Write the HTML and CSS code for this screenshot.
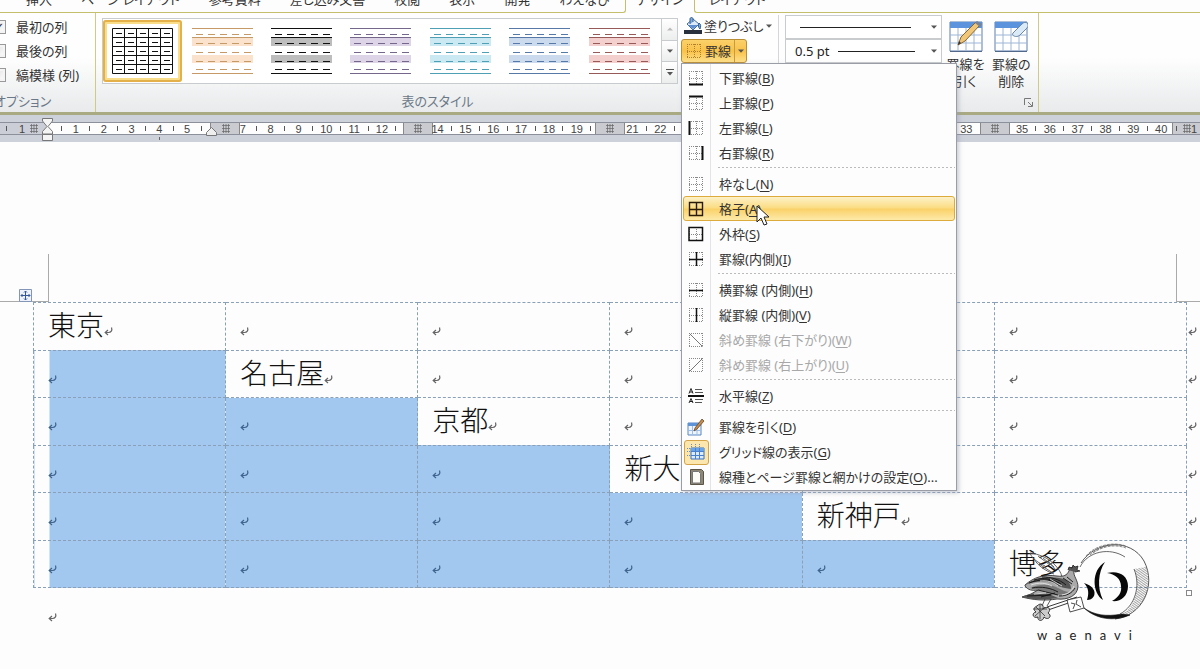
FILE: index.html
```html
<!DOCTYPE html>
<html lang="ja">
<head>
<meta charset="utf-8">
<meta name="viewport" content="width=device-width, initial-scale=1">
<title>表のスタイル</title>
<link rel="stylesheet" href="styles.css">
</head>
<body>
<svg class="defs" aria-hidden="true">
  <symbol id="ret" viewBox="0 0 9 9"><path d="M7.500 .5c1 3-.5 5-3 5H2M4 3 1.200 5.500 4 8" fill="none" stroke="currentColor" stroke-width="1.200"/></symbol>
  <symbol id="hash" viewBox="0 0 9 9"><path d="M1 1.500h8M1 4.500h8M1 7.500h8M2.500 0v9M5 0v9M7.500 0v9" stroke="#666" stroke-width=".7"/></symbol>
  <symbol id="down" viewBox="0 0 6 4"><path d="M0 .5h6L3 3.800z" fill="currentColor"/></symbol>
  <symbol id="style" viewBox="0 0 61 46">
    <path d="M0 10h61v8H0zM0 27h61v8H0z" class="band"/>
    <path d="M0 .5h61M0 9.500h61M0 45.500h61" stroke="currentColor"/>
    <path d="M4 6.500h56M4 15.500h56M4 24.500h56M4 33.500h56M4 41.500h56" stroke="currentColor" stroke-dasharray="7 5"/>
  </symbol>
  <symbol id="dots" viewBox="0 0 16 16"><path d="M1 1.500h14M1 8.500h14M1 14.500h14M1.500 1v14M8.500 1v14M14.500 1v14" stroke="#888" stroke-dasharray="1 1"/></symbol>
  <symbol id="frame" viewBox="0 0 16 16"><path d="M1 1.500h14M1 14.500h14M1.500 1v14M14.500 1v14" stroke="#888" stroke-dasharray="1 1"/></symbol>
  <symbol id="sheet" viewBox="0 0 34 32">
    <path d="M1 1h32v29H1z" fill="#fff" stroke="#5c7eae"/>
    <path d="M1 1h32v6H1z" fill="#5b93dc"/>
    <path d="M1 14h32M1 22h32M9 7v23M17 7v23M25 7v23" stroke="#9db6d4"/>
    <path d="M1 30.500h32" stroke="#52698c"/>
  </symbol>
</svg>

<header class="ribbon">
  <nav class="tabs" aria-label="リボン">
    <div class="tabs-main">
      <button>挿入</button><button>ページ レイアウト</button><button>参考資料</button><button>差し込み文書</button><button>校閲</button><button>表示</button><button>開発</button><button>わえなび</button>
    </div>
    <button class="active">デザイン</button>
    <div class="tabs-rest"><button>レイアウト</button></div>
  </nav>

  <div class="groups">
    <section class="group options">
      <div class="checks">
        <label><input type="checkbox" checked>最初の列</label>
        <label><input type="checkbox">最後の列</label>
        <label><input type="checkbox">縞模様 (列)</label>
      </div>
      <h2>オプション</h2>
    </section>

    <section class="group styles">
      <div class="row">
        <div class="gallery">
          <div class="thumbs">
            <button class="selected" aria-label="表 (格子)"><svg viewBox="0 0 61 46"><path d="M.5.500h60v45H.5zM0 9.500h61M0 18.500h61M0 27.500h61M0 36.500h61M12.500 0v46M24.500 0v46M36.500 0v46M48.500 0v46" fill="none" stroke="#111"/><path d="M4 5.500h56M4 14.500h56M4 23.500h56M4 32.500h56M4 41.500h56" stroke="#111" stroke-dasharray="6 6"/></svg></button>
            <button class="orange" aria-label="オレンジ"><svg><use href="#style"/></svg></button>
            <button class="black" aria-label="黒"><svg><use href="#style"/></svg></button>
            <button class="purple" aria-label="紫"><svg><use href="#style"/></svg></button>
            <button class="aqua" aria-label="水色"><svg><use href="#style"/></svg></button>
            <button class="blue" aria-label="青"><svg><use href="#style"/></svg></button>
            <button class="red" aria-label="赤"><svg><use href="#style"/></svg></button>
          </div>
          <div class="scroller">
            <button disabled aria-label="上へ"><svg viewBox="0 0 6 4"><path d="M0 3.500h6L3 .5z" fill="#bbb"/></svg></button>
            <button aria-label="下へ"><svg><use href="#down"/></svg></button>
            <button aria-label="その他"><svg class="more" viewBox="0 0 8 7"><path d="M0 .5h8" stroke="#555"/><path d="M1 3h6L4 6.500z" fill="#555"/></svg></button>
          </div>
        </div>
        <div class="fills">
          <button class="tool"><svg class="bucket" viewBox="0 0 18 18"><path d="M0 13h18v4H0z" fill="#27303c"/><path d="M3 7 9 2l6 5-6 6z" fill="#dce9f8" stroke="#426ba4"/><path d="M4 8h10l-5 4z" fill="#5d8fcf"/><path d="M6 7V2c0-2 3-2 3 0v3M15 6c2 1 2 4 1 6-2-2-2-4-1-6z" fill="#7ba9df" stroke="#345c91"/></svg>塗りつぶし<svg class="caret"><use href="#down"/></svg></button>
          <div class="dropdown">
            <button class="split" aria-expanded="true"><svg class="ico" viewBox="0 0 16 16"><path d="M1 1.500h14M1 8.500h14M1 14.500h14M1.500 1v14M8.500 1v14M14.500 1v14" stroke="#b0802a" stroke-dasharray="1 1"/></svg>罫線<span class="arrow"><svg><use href="#down"/></svg></span></button>
            <div class="menu" role="menu">
              <button role="menuitem"><svg class="ico" viewBox="0 0 16 16"><use href="#dots"/><path d="M1 14.500h14" stroke="#111" stroke-width="2"/></svg><span>下罫線(<u>B</u>)</span></button>
              <button role="menuitem"><svg class="ico" viewBox="0 0 16 16"><use href="#dots"/><path d="M1 1.500h14" stroke="#111" stroke-width="2"/></svg><span>上罫線(<u>P</u>)</span></button>
              <button role="menuitem"><svg class="ico" viewBox="0 0 16 16"><use href="#dots"/><path d="M1.500 1v14" stroke="#111" stroke-width="2"/></svg><span>左罫線(<u>L</u>)</span></button>
              <button role="menuitem"><svg class="ico" viewBox="0 0 16 16"><use href="#dots"/><path d="M14.500 1v14" stroke="#111" stroke-width="2"/></svg><span>右罫線(<u>R</u>)</span></button>
              <hr>
              <button role="menuitem"><svg class="ico" viewBox="0 0 16 16"><use href="#dots"/></svg><span>枠なし(<u>N</u>)</span></button>
              <button role="menuitem" class="hover"><svg class="ico" viewBox="0 0 16 16"><path d="M1.500 1.500h13v13h-13zM8.500 1v14M1 8.500h14" fill="none" stroke="#2a1c06" stroke-width="1.400"/></svg><span>格子(<u>A</u>)</span>
                <svg class="cursor" viewBox="0 0 13 22"><path d="M1 1v16l4-4 3 7 3-1-3-7h5z" fill="#fff" stroke="#222"/></svg></button>
              <button role="menuitem"><svg class="ico" viewBox="0 0 16 16"><use href="#dots"/><path d="M1 1.500h13.500v13H1z" fill="none" stroke="#111" stroke-width="1.500"/></svg><span>外枠(<u>S</u>)</span></button>
              <button role="menuitem"><svg class="ico" viewBox="0 0 16 16"><use href="#dots"/><path d="M8.500 1v14M1 8.500h14" stroke="#111" stroke-width="1.500"/></svg><span>罫線(内側)(<u>I</u>)</span></button>
              <hr>
              <button role="menuitem"><svg class="ico" viewBox="0 0 16 16"><use href="#dots"/><path d="M1 8.500h14" stroke="#111" stroke-width="1.500"/></svg><span>横罫線 (内側)(<u>H</u>)</span></button>
              <button role="menuitem"><svg class="ico" viewBox="0 0 16 16"><use href="#dots"/><path d="M8.500 1v14" stroke="#111" stroke-width="1.500"/></svg><span>縦罫線 (内側)(<u>V</u>)</span></button>
              <button role="menuitem" disabled><svg class="ico" viewBox="0 0 16 16"><use href="#frame"/><path d="m1.500 1.500 13 13" stroke="#777"/></svg><span>斜め罫線 (右下がり)(<u>W</u>)</span></button>
              <button role="menuitem" disabled><svg class="ico" viewBox="0 0 16 16"><use href="#frame"/><path d="m1.500 14.500 13-13" stroke="#777"/></svg><span>斜め罫線 (右上がり)(<u>U</u>)</span></button>
              <hr>
              <button role="menuitem"><svg class="ico" viewBox="0 0 16 16"><path d="M0 8h16" stroke="#111" stroke-width="2"/><path d="m1 5.500 2-5 2 5M2 4h3M1 15l2-4.500L5 15M2 13.500h3" fill="none" stroke="#222"/><path d="M7 1.500h7M7 4.500h8M7 11.500h8M7 14.500h7" stroke="#555"/></svg><span>水平線(<u>Z</u>)</span></button>
              <hr>
              <button role="menuitem"><svg class="ico big" viewBox="0 0 18 18"><path d="M1 5h13v12H1z" fill="#eef5ff" stroke="#5a86c4"/><path d="M1 5h13v3H1z" fill="#5f93d8"/><path d="M1 12.500h13M5.500 8v9M10 8v9" stroke="#9dbce6"/><path d="m7 13 1-3 7-9 2 2-7 8z" fill="#c58b4c" stroke="#6a4926" stroke-width=".8"/></svg><span>罫線を引く(<u>D</u>)</span></button>
              <button role="menuitem" class="on"><svg class="ico big" viewBox="0 0 18 18"><path d="M4 5h13v11H4z" fill="#dcebfb" stroke="#3a70bd"/><path d="M4 5h13v3H4z" fill="#69a3e8"/><path d="M4 8.500h13M4 12.500h13M8.500 5v11M12.500 5v11" stroke="#4a80cd"/><path d="M0 5.500h4M0 8.500h4M0 12.500h4M4.500 1v4M8.500 1v4M12.500 1v4" stroke="#6f8fb8" stroke-dasharray="1 1"/></svg><span>グリッド線の表示(<u>G</u>)</span></button>
              <button role="menuitem"><svg class="ico big" viewBox="0 0 18 18"><path d="M3.500 1.500h11l2 2v13h-13z" fill="#8c8777" stroke="#5a5547"/><path d="M5.500 3.500h6l2 2v9.500h-8z" fill="#fdfcf6" stroke="#777"/></svg><span>線種とページ罫線と網かけの設定(<u>O</u>)...</span></button>
            </div>
          </div>
        </div>
      </div>
      <h2>表のスタイル</h2>
    </section>

    <section class="group pens">
      <div class="combos">
        <label class="combo"><select aria-label="ペンのスタイル"><option></option></select><i class="stroke wide"></i><svg><use href="#down"/></svg></label>
        <label class="combo"><select aria-label="ペンの太さ"><option>0.5 pt</option></select><i class="stroke"></i><svg><use href="#down"/></svg></label>
      </div>
      <button class="large"><svg viewBox="0 0 34 32"><use href="#sheet"/><path d="m9 24 3-8L27 1l4 3-15 16z" fill="#f0c679" stroke="#8a662c"/><path d="m26 2 2-2 5 3-2 3z" fill="#75839a"/><path d="m9 24 1-4 2 2z" fill="#333"/></svg><span>罫線を<br>引く</span></button>
      <button class="large"><svg viewBox="0 0 34 32"><use href="#sheet"/><path d="m19 12 9-9c4-4 8 0 5 4l-7 7c-3 3-9 1-7-2z" fill="#dbeaf7" stroke="#6c87a7"/></svg><span>罫線の<br>削除</span></button>
      <button class="launcher" aria-label="罫線の設定"><svg viewBox="0 0 9 9"><path d="M.5 7V.5H7M4 4l4 4M8.500 4v4.500H4" fill="none" stroke="#777"/></svg></button>
    </section>
  </div>
</header>

<div class="ruler">
  <div class="bands">
    <i class="edge"></i><i class="col first"></i><i class="mark"><svg><use href="#hash"/></svg></i><i class="col"></i><i class="mark"><svg><use href="#hash"/></svg></i><i class="col"></i><i class="mark"><svg><use href="#hash"/></svg></i><i class="col"></i><i class="mark"><svg><use href="#hash"/></svg></i><i class="col"></i><i class="mark"><svg><use href="#hash"/></svg></i><i class="col"></i><i class="mark end"><svg><use href="#hash"/></svg></i>
  </div>
  <div class="before"><b></b><span>1</span></div>
  <svg class="before-mark"><use href="#hash"/></svg>
  <ol class="scale">
    <li><span>1</span></li><li><span>2</span></li><li><span>3</span></li><li><span>4</span></li><li><span>5</span></li><li></li><li class="bare"><span>7</span></li><li><span>8</span></li><li><span>9</span></li><li><span>10</span></li><li><span>11</span></li><li><span>12</span></li><li></li><li class="bare"><span>14</span></li><li><span>15</span></li><li><span>16</span></li><li><span>17</span></li><li><span>18</span></li><li><span>19</span></li><li></li><li class="bare"><span>21</span></li><li><span>22</span></li><li></li><li></li><li></li><li></li><li></li><li class="bare"></li><li></li><li></li><li></li><li></li><li><span>33</span></li><li class="bare"></li><li class="bare"><span>35</span></li><li><span>36</span></li><li><span>37</span></li><li><span>38</span></li><li><span>39</span></li><li><span>40</span></li>
  </ol>
  <div class="after"><b></b><span>1</span></div>
  <svg class="indent" viewBox="0 0 11 24"><path d="M.5.500h10V3L6 8.500l4.500 5V16H.5v-2.500L5 8.500.5 3z" fill="#f4f4f4" stroke="#777"/><path d="M.5 16.500h10v6H.5z" fill="#f4f4f4" stroke="#777"/></svg>
  <svg class="indent right" viewBox="0 0 11 9"><path d="m5.500.500 5 5v3H.5v-3z" fill="#eee" stroke="#777"/></svg>
  <i class="tabstop"></i>
</div>

<main class="page">
  <div class="corners"><i class="corner-left"></i><i class="corner-right"></i>
    <button class="handle" aria-label="表の移動"><svg viewBox="0 0 13 13"><path d="M.5.500h12v12H.5z" fill="#eef2fb" stroke="#8296b8"/><path d="M6.500 2v9M2 6.500h9M5 3.500l1.500-1.500L8 3.500M5 9.500 6.500 11 8 9.500M3.500 5 2 6.500 3.500 8M9.500 5 11 6.500 9.500 8" fill="none" stroke="#35589a"/></svg></button>
  </div>
  <table>
    <colgroup><col><col><col><col><col><col><col class="tail"></colgroup>
    <tbody>
      <tr><td>東京<svg><use href="#ret"/></svg></td><td><svg><use href="#ret"/></svg></td><td><svg><use href="#ret"/></svg></td><td><svg><use href="#ret"/></svg></td><td><svg><use href="#ret"/></svg></td><td><svg><use href="#ret"/></svg></td><td><svg><use href="#ret"/></svg></td></tr>
      <tr><td class="sel"><svg><use href="#ret"/></svg></td><td>名古屋<svg><use href="#ret"/></svg></td><td><svg><use href="#ret"/></svg></td><td><svg><use href="#ret"/></svg></td><td><svg><use href="#ret"/></svg></td><td><svg><use href="#ret"/></svg></td><td><svg><use href="#ret"/></svg></td></tr>
      <tr><td class="sel"><svg><use href="#ret"/></svg></td><td class="sel"><svg><use href="#ret"/></svg></td><td>京都<svg><use href="#ret"/></svg></td><td><svg><use href="#ret"/></svg></td><td><svg><use href="#ret"/></svg></td><td><svg><use href="#ret"/></svg></td><td><svg><use href="#ret"/></svg></td></tr>
      <tr><td class="sel"><svg><use href="#ret"/></svg></td><td class="sel"><svg><use href="#ret"/></svg></td><td class="sel"><svg><use href="#ret"/></svg></td><td>新大阪<svg><use href="#ret"/></svg></td><td><svg><use href="#ret"/></svg></td><td><svg><use href="#ret"/></svg></td><td><svg><use href="#ret"/></svg></td></tr>
      <tr><td class="sel"><svg><use href="#ret"/></svg></td><td class="sel"><svg><use href="#ret"/></svg></td><td class="sel"><svg><use href="#ret"/></svg></td><td class="sel"><svg><use href="#ret"/></svg></td><td>新神戸<svg><use href="#ret"/></svg></td><td><svg><use href="#ret"/></svg></td><td><svg><use href="#ret"/></svg></td></tr>
      <tr><td class="sel"><svg><use href="#ret"/></svg></td><td class="sel"><svg><use href="#ret"/></svg></td><td class="sel"><svg><use href="#ret"/></svg></td><td class="sel"><svg><use href="#ret"/></svg></td><td class="sel"><svg><use href="#ret"/></svg></td><td>博多</td><td><svg><use href="#ret"/></svg></td></tr>
    </tbody>
  </table>
  <div class="below"><svg><use href="#ret"/></svg><i class="resize"></i></div>
</main>

<div class="brand">
  <svg viewBox="0 0 130 80" aria-hidden="true">
    <defs><pattern id="hatch" width="2" height="2" patternUnits="userSpaceOnUse" patternTransform="rotate(35)"><path d="M0 0h2" stroke="#222" stroke-width="1.100"/></pattern></defs>
    <path d="M126 24c8 25-6 49-33 52 15-6 20-14 23-25 2-8 1-17-2-25z" fill="url(#hatch)" opacity=".8"/>
    <path d="M61 20C76-3 111-5 124 18c13 25-2 55-29 58" fill="none" stroke="#444" stroke-width=".9"/>
    <path d="M60 24C68 8 90 4 105 14M114 26c7 17 1 37-14 45" fill="none" stroke="#444" stroke-width=".8"/>
    <path d="M66 13C74 3 92-2 106 3M70 12C78 5 88 1 98 2M73 10C83 3 95 1 106 5" fill="none" stroke="#666" stroke-width=".7" stroke-dasharray="3 1"/>
    <path d="M64 65c10 7 22 9 38 6l8 1c-17 7-34 4-46-7z" fill="#111" stroke="#111" stroke-width=".6"/>
    <path d="M85 19C71 27 72 50 83 57 77 45 78 29 85 19zM87 30c11-3 21 2 21 13 0 11-8 16-16 15 7-4 10-9 9-15 0-7-6-12-14-13zM64 40c9 3 12 8 10 13-2 3-4 4-7 4 2-6 2-12-3-17z" fill="#080808"/>
    <path d="M10 10c9 1 18 5 24 11 4 4 7 8 8 13M10 10c2 6 9 10 15 13M14 16c4 7 12 12 20 15M18 13l12 9M23 15l11 9M19 21l14 9M28 18l8 9" fill="none" stroke="#555" stroke-width=".9"/>
    <path d="M5 42C14 34 24 31 37 33c7 1 10-1 12-5 1-4 5-5 8-3l-3 3c-1 5 4 9 4 16-1 9-10 13-21 12-12 2-24 1-35-2l9-3 7-4c-6 1-10 0-13-4z" fill="#aaa" stroke="#222" stroke-width=".8"/>
    <path d="M5 42c10-7 21-9 34-7 8 1 12 5 12 11-9-1-13-3-19-6-10-3-19-1-27 2z" fill="#555"/>
    <path d="M10 45c9-4 18-4 26-1 6 3 10 5 14 5-8 4-17 3-23 0-6-2-12-2-17-4z" fill="#777"/>
    <path d="M2 54c9-4 18-5 27-3l9 4c-12 2-26 2-36-1z" fill="#555"/>
    <path d="M9 40c10-4 20-4 30 0M14 37c9-3 19-1 27 4M22 34c9 0 17 2 24 8M12 45c9-2 19 0 26 4M18 47l20 5M7 53l24-1M21 54l14-4M39 53c8 0 13-3 16-8M43 35l9 6M47 34l6 5" fill="none" stroke="#111" stroke-width=".9"/>
    <path d="M11 42c8-3 15-2 21 1M20 38c7-1 13 1 18 5M30 36l12 7M42 52c6-1 10-4 12-9M14 51l12-1" fill="none" stroke="#eee" stroke-width=".8"/>
    <path d="m48 27 1-3 3 1 1-3 2 2 3-1-1 4 3 1-5 1" fill="#555" stroke="#111" stroke-width=".7"/>
    <path d="m27 64 30-10M28 67l32-11" stroke="#222" stroke-width=".9"/>
    <path d="m47 57 14-3 3 11-14 4zM51 60l4 1-2 5M57 57l-1 4 5 3" fill="#fff" stroke="#222" stroke-width=".8"/>
    <path d="M17 63c4-4 7-1 6 3 5-4 9 0 5 4 5 3 0 8-4 4-1 5-7 4-6 0-5 2-7-4-2-5-3-2-2-5 1-6z" fill="#ccc" stroke="#222" stroke-width=".9"/>
    <path d="M13 66h14M20 62v14M15 73l10-9M16 64l9 9M25 56l-3 7M31 56l-4 7" stroke="#333" stroke-width=".8"/>
  </svg>
  <span>waenavi</span>
</div>
</body>
</html>
```

FILE: styles.css
```css
* { box-sizing: border-box; }
body {
  margin: 0;
  min-height: 100vh;
  display: flex;
  flex-direction: column;
  position: relative;
  overflow-x: hidden;
  background: #fdfdfd;
  color: #333;
  font: 13px/16px "Noto Sans", "Noto Sans CJK JP", sans-serif;
  font-feature-settings: "palt";
}
button { font: inherit; color: inherit; background: none; border: 0; padding: 0; font-feature-settings: inherit; }
svg { display: block; flex: none; }
h2 { margin: 0; font: inherit; color: #6b7888; text-align: center; }
.defs { position: absolute; width: 0; height: 0; }

.tabs { display: flex; height: 13px; }
.tabs button { white-space: nowrap; }
.tabs-main, .tabs-rest, .tabs > .active {
  display: flex;
  align-items: flex-end;
  overflow: hidden;
  padding-bottom: 5px;
}
.tabs-main { width: 626px; gap: 29px; padding-left: 26px; border-bottom: 1px solid #c3bf6a; border-right: 1px solid #c3bf6a; border-radius: 0 0 3px 0; }
.tabs > .active { width: 68px; justify-content: center; padding-bottom: 6px; }
.tabs-rest { flex: 1; padding-left: 14px; border-bottom: 1px solid #c3bf6a; border-left: 1px solid #c3bf6a; border-radius: 0 0 0 3px; }

.groups {
  display: flex;
  height: 102px;
  border-bottom: 3px solid #a9a982;
  background: linear-gradient(#fefefe 0 45%, #e8eaeb);
}
.group { display: flex; flex-direction: column; position: relative; }
.group h2 { margin-top: auto; padding-bottom: 3px; }

.options { width: 96px; border-right: 1px solid #cfca86; }
.options h2 { text-align: left; margin-left: -6px; white-space: nowrap; }
.checks { display: flex; flex-direction: column; gap: 8px; padding-top: 6px; margin-left: -8px; }
.checks label { display: flex; align-items: center; gap: 10px; white-space: nowrap; }
.checks input {
  appearance: none;
  width: 14px;
  height: 14px;
  margin: 0;
  border: 1px solid #999;
  background: linear-gradient(135deg, #ddd, #fff);
  box-shadow: inset 0 0 0 2px #f4f4f4;
  display: grid;
  place-items: center;
}
.checks input:checked::before { content: "✓"; font: 13px/13px "DejaVu Sans", sans-serif; color: #334; }

.styles { width: 683px; }
.row { display: flex; align-items: flex-start; }
.gallery { display: flex; width: 576px; height: 66px; margin: 5px 1px 0 6px; border: 1px solid #c9cccf; background: #fff; }
.thumbs { display: grid; grid-template-columns: repeat(7, 1fr); flex: 1; align-items: center; padding-right: 2px; }
.thumbs button { height: 62px; display: grid; place-items: center; }
.thumbs svg { width: 61px; height: 46px; }
.thumbs .selected { border-radius: 3px; box-shadow: inset 0 0 0 2px #e3b04a, inset 0 0 0 4px #f9dd8a; }
.orange { color: #c69a66; fill: #fbe2cd; }
.black { color: #111; fill: #bdbdbd; }
.purple { color: #75678c; fill: #ddd4e8; }
.aqua { color: #4fa0b5; fill: #cbe9f2; }
.blue { color: #5779a8; fill: #ccdaee; }
.red { color: #985a58; fill: #f3cfce; }
.scroller { width: 16px; display: flex; flex-direction: column; border-left: 1px solid #c9cccf; }
.scroller button { flex: 1; display: grid; place-items: center; background: linear-gradient(#fff, #eceded); color: #555; }
.scroller button + button { border-top: 1px solid #c9cccf; }
.scroller svg { width: 6px; height: 4px; }
.scroller .more { width: 8px; height: 7px; }

.fills { flex: 1; padding: 2px 0 0 2px; }
.styles::after { content: ""; position: absolute; right: 0; top: 2px; bottom: 8px; border-right: 1px solid #d4d6d8; }
.tool { display: flex; align-items: center; gap: 2px; height: 24px; padding: 0 0 2px 3px; white-space: nowrap; }
.bucket { width: 18px; height: 18px; }
.caret, .arrow svg, .combo svg { width: 6px; height: 4px; color: #555; }
.dropdown { position: relative; z-index: 3; width: 66px; }
.split {
  display: flex;
  align-items: center;
  gap: 3px;
  width: 66px;
  height: 24px;
  padding-left: 4px;
  white-space: nowrap;
  border: 1px solid #b98e35;
  border-radius: 3px;
  background: linear-gradient(#fbd16a, #f9c24a 50%, #fde08a);
}
.arrow { flex: 1; align-self: stretch; display: grid; place-items: center; border-left: 1px solid #c99b3e; }
.ico { width: 16px; height: 16px; }
.ico.big { width: 18px; height: 18px; margin: 0 -1px; }

.menu {
  position: absolute;
  top: 100%;
  left: 0;
  width: 276px;
  padding: 1px;
  border: 1px solid #9b9da6;
  background: linear-gradient(90deg, #fdfdfd 28px, #e3e4e6 28px 29px, #fdfdfd 29px);
  box-shadow: 2px 2px 4px #9aa0b080;
}
.menu button {
  display: flex;
  align-items: center;
  width: 100%;
  height: 25px;
  padding: 0 4px;
  gap: 15px;
  border: 1px solid transparent;
  border-radius: 3px;
  position: relative;
  white-space: nowrap;
  text-align: left;
}
.menu u { text-underline-offset: 2px; }
.menu button:disabled { color: #a8a8a8; }
.menu hr { height: 1px; margin: 2px 0 3px 35px; border: 0; background: repeating-linear-gradient(90deg, #bbb 0 2px, transparent 2px 4px); }
.menu .hover { z-index: 1; border-color: #dcab3c; background: linear-gradient(#fdf1c8, #fbdc82 48%, #fad169 52%, #fdeaa9); }
.menu .on::before {
  content: "";
  position: absolute;
  left: 0;
  top: 0;
  width: 23px;
  height: 23px;
  border: 1px solid #d3a348;
  border-radius: 3px;
  background: #fbe6ae;
}
.menu .on svg { position: relative; }
.cursor { position: absolute; left: 72px; top: 8px; width: 13px; height: 22px; }

.pens { width: 260px; flex-direction: row; padding: 2px 4px 0 6px; border-right: 1px solid #cfca86; }
.combos { width: 158px; display: flex; flex-direction: column; }
.combo { display: flex; align-items: center; justify-content: flex-end; gap: 16px; height: 24px; padding-right: 4px; position: relative; border: 1px solid #c9cccf; background: #fff; }
.combo select {
  appearance: none;
  position: absolute;
  inset: 0;
  width: 100%;
  padding: 0 9px;
  border: 0;
  background: none;
  color: #222;
  font: inherit;
}
.stroke { width: 77px; height: 1px; background: #222; }
.stroke.wide { width: 111px; margin-right: 4px; }
.large { width: 46px; height: 86px; display: flex; flex-direction: column; align-items: center; gap: 3px; padding-top: 6px; line-height: 17px; white-space: nowrap; }
.large svg { width: 34px; height: 32px; }
.pens .combos + .large { margin-left: 1px; }
.launcher { position: absolute; right: 5px; bottom: 5px; }
.launcher svg { width: 9px; height: 9px; }

.ruler {
  display: grid;
  grid-template-columns: 55px 1fr 32px;
  height: 27px;
  padding: 7px 0;
  position: relative;
  background: #cdd1da;
  font: 11px/12px "Liberation Sans", sans-serif;
  color: #444;
}
.bands { grid-area: 1 / 1 / 2 / 4; display: flex; border: solid #8b909a; border-width: 1px 0; }
.edge { width: 48px; background: #cbced6; }
.col { flex: 162; background: #fdfdfd; }
.mark { width: 30px; display: grid; place-items: center; background: #c9cbd0; border: solid #888; border-width: 0 1px; }
.mark.end { width: 28px; border-right: 0; }
.ruler svg { width: 9px; height: 9px; }
.before, .scale, .after { grid-row: 1; display: flex; align-items: center; }
.before { grid-column: 1; padding-left: 6px; }
.before span { margin-left: 12px; }
.ruler .before-mark { grid-area: 1 / 1; align-self: center; justify-self: end; margin-right: 17px; }
.before b, .after b, .scale li::before { width: 1px; height: 5px; background: #555; }
.scale { grid-column: 2; list-style: none; margin: 0; padding: 0; }
.scale li { flex: 1 1 0; display: grid; grid-template-columns: 1fr 1fr; place-items: center; min-width: 0; }
.scale li::before { content: ""; }
.scale .bare::before { visibility: hidden; }
.scale span { white-space: nowrap; margin: 0 -3px; }
.after { grid-column: 3; padding-left: 8px; gap: 14px; }
.ruler .indent { position: absolute; left: 42px; top: 3px; width: 11px; height: 24px; }
.ruler .indent.right { left: 206px; top: 12px; height: 9px; }
.tabstop { position: absolute; left: 159px; bottom: 2px; width: 1px; height: 3px; background: #666; }

.page { padding-top: 112px; color: #111; }
.corners { display: flex; justify-content: space-between; height: 48px; position: relative; }
.corner-left { width: 49px; border: solid #aaa; border-width: 0 1px 1px 0; }
.corner-right { width: 24px; border: solid #aaa; border-width: 0 0 1px 1px; }
.handle { position: absolute; left: 19px; bottom: 0; }
.handle svg { width: 13px; height: 13px; }
table {
  width: calc(100% - 33px);
  height: 286px;
  margin-left: 33px;
  table-layout: fixed;
  border-collapse: collapse;
}
.tail { width: 13px; }
td {
  padding: 0 0 4px 14px;
  border: 1px dashed #8aa0b8;
  vertical-align: middle;
  font: 300 28px/40px "Noto Sans CJK JP", sans-serif;
  font-feature-settings: normal;
  white-space: nowrap;
}
td:last-child { border: 0; padding-left: 1px; }
td svg { display: inline-block; width: 9px; height: 9px; color: #666; }
.sel { background: #a3c8f0; }
.sel:first-child { background: linear-gradient(90deg, #fdfdfd 15px, #a3c8f0 15px); }
.sel svg { color: #3f658f; }
.below { display: flex; justify-content: space-between; align-items: flex-start; padding: 2px 8px 0 48px; }
.below > svg { width: 9px; height: 9px; margin-top: 23px; color: #666; }
.resize { width: 6px; height: 6px; border: 1px solid #888; background: #fff; }

.brand {
  position: absolute;
  right: 50px;
  top: 543px;
  width: 130px;
  color: #222;
}
.brand svg { width: 130px; height: 80px; }
.brand span { display: block; margin-top: 4px; padding-left: 17px; font: 13px/16px Lato, sans-serif; letter-spacing: 8px; }
```
